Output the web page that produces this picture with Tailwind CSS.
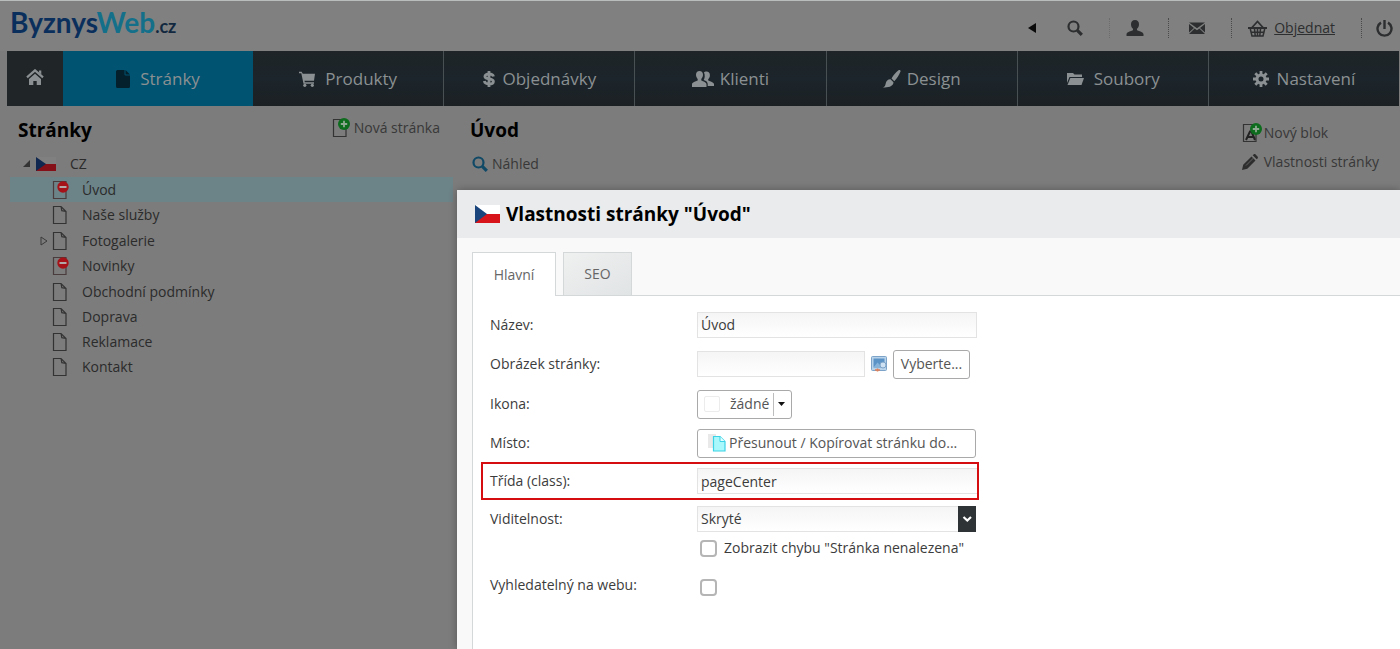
<!DOCTYPE html>
<html lang="cs">
<head>
<meta charset="utf-8">
<meta name="viewport" content="width=device-width, initial-scale=1">
<title>ByznysWeb.cz – Vlastnosti stránky</title>
<script src="https://cdn.jsdelivr.net/npm/@tailwindcss/browser@4"></script>
</head>
<body class="relative flex flex-col min-h-screen overflow-hidden bg-[#7c7c7c] border-t border-[#b9bdbc] font-['Open_Sans','Noto_Sans',sans-serif] text-[14px] leading-5 text-[#2b2b2b]">

<svg class="hidden" aria-hidden="true">
  <symbol id="page" viewBox="0 0 16 20"><path d="M1.500 1.500h7.500l5 5v12h-12.500z M9 1.500l.8 4.200 4.200.8" fill="none" stroke="#333" stroke-width="1.200"/></symbol>
  <symbol id="page-hidden" viewBox="0 0 18 20"><path d="M1.500 1.500h12.500v17h-12.500z" fill="none" stroke="#4a3c3c" stroke-width="1.200"/><circle cx="11" cy="7" r="5.700" fill="#a51218"/><path d="M7.500 7h7" stroke="#b3a8a8" stroke-width="2"/></symbol>
  <symbol id="search" viewBox="0 0 16 16"><circle cx="6.500" cy="6.500" r="5" fill="none" stroke="currentColor" stroke-width="2.200"/><path d="M10.300 10.300l4.500 4.500" stroke="currentColor" stroke-width="3.200"/></symbol>
  <symbol id="plus-badge" viewBox="0 0 12 12"><circle cx="6" cy="6" r="6" fill="#0d6c1d"/><path d="M6 2.800v6.400M2.800 6h6.400" stroke="#8fa892" stroke-width="1.800"/></symbol>
</svg>

<header class="flex h-[50px] items-center pl-2.5 pr-[7px] bg-[#808080] text-[#2c2e2f]">
  <a href="#" class="mr-auto pb-1 font-['Lato',sans-serif] font-bold text-[28px] leading-8 text-[#0b2f5c]">Byznys<span class="text-[#14708a]">Web</span><span class="text-[18px] text-[#12283f]">.cz</span></a>
  <div class="flex items-center pt-1">
    <button type="button" aria-label="Sbalit" class="mr-7.5"><svg class="w-2.5 h-2.5" viewBox="0 0 10 10"><path d="M9 0v10L1 5z" fill="#0a0a0a"/></svg></button>
    <button type="button" aria-label="Hledat" class="mr-6.5"><svg class="size-4"><use href="#search"/></svg></button>
    <span class="h-5 border-l border-dotted border-[#6c6c6c] mr-4"></span>
    <button type="button" aria-label="Účet" class="mr-6"><svg class="w-[18px] h-4" viewBox="0 0 18 16" fill="currentColor"><path d="M9 0c2.600 0 4 1.800 4 4.200 0 1.900-.8 3.600-2 4.600v1.400c2 .9 6.500 1.700 6.500 4V16H.5v-1.800c0-2.300 4.500-3.100 6.500-4V8.800C5.800 7.800 5 6.100 5 4.200 5 1.800 6.400 0 9 0z"/></svg></button>
    <span class="h-5 border-l border-dotted border-[#4a4a4a] mr-5"></span>
    <button type="button" aria-label="Zprávy" class="mr-6.5"><svg class="w-4 h-3" viewBox="0 0 16 12" fill="currentColor"><path d="M0 .5h16L8 6.300z"/><path d="M0 2l5 3.900L0 10.500zM16 2l-5 3.900 5 4.600zM5.600 6.500L8 8.200l2.400-1.700L16 12H0z"/></svg></button>
    <span class="h-5 border-l border-dotted border-[#4a4a4a] mr-4"></span>
    <a href="#" class="flex items-center gap-[7px] mr-6.5"><svg class="w-[19px] h-[17px]" viewBox="0 0 19 17" fill="none" stroke="currentColor"><path d="M4 7.500l5.500-6 5.500 6" stroke-width="1.800"/><path d="M0 8h19" stroke-width="2"/><path d="M2.300 9l1.700 7h11l1.700-7M6.500 9l.7 6.500M9.500 9v6.500M12.500 9l-.7 6.500M3 12.300h13" stroke-width="1.500"/></svg><span class="underline">Objednat</span></a>
    <span class="h-5 border-l border-dotted border-[#4a4a4a] mr-3.5"></span>
    <button type="button" aria-label="Odhlásit"><svg class="size-[17px]" viewBox="0 0 17 17" fill="none" stroke="currentColor" stroke-width="2.400"><path d="M5 2.600a7 7 0 1 0 7 0M8.500 0v9"/></svg></button>
  </div>
</header>

<nav class="flex h-[55px] ml-[7px] mr-px bg-linear-to-b from-[#1e2427] via-[#1c252b] to-[#1b2023] text-[17px] leading-6 text-[#8b9092]">
  <a href="#" aria-label="Domů" class="flex w-14 items-center justify-center bg-[#202528]"><svg class="w-[18px] h-4 mb-1" viewBox="0 0 18 16"><path d="M1 8.300L9 1.300l8 7" fill="none" stroke="currentColor" stroke-width="2.200"/><path d="M13 1.500h2.300v4L13 3.500zM9 4.800l6 5.200v6h-4.300v-4H7.300v4H3v-6z" fill="currentColor"/></svg></a>
  <a href="#" class="flex flex-1 items-center justify-center gap-2.5 bg-[#005371]"><svg class="w-3.5 h-[18px]" viewBox="0 0 14 18"><path d="M1.500 0H8.500v4.500q0 1 1 1H14v11q0 1.500-1.500 1.500h-11Q0 18 0 16.500v-15Q0 0 1.500 0zM9.500 0L14 4.600H9.500z" fill="#04202c"/></svg>Stránky</a>
  <a href="#" class="flex flex-1 items-center justify-center gap-2.5"><svg class="w-4 h-4" viewBox="0 0 16 16"><path d="M0 .8h2.600l1.200 2H16l-1 7H5.500l.3 1.500H15v1.500H4.500L2.300 2.300H0z" fill="currentColor"/><circle cx="5.800" cy="14.300" r="1.600" fill="currentColor"/><circle cx="13.300" cy="14.300" r="1.600" fill="currentColor"/></svg>Produkty</a>
  <a href="#" class="flex flex-1 items-center justify-center gap-2 border-l border-[#485054]"><svg class="w-3 h-4" viewBox="0 0 12 16" fill="none" stroke="currentColor" stroke-width="2.800"><path d="M10.500 5.500C10 3.600 8.500 3 6 3 3.500 3 1.900 3.900 1.900 5.400 1.900 9 10.400 6.600 10.400 10.400 10.400 12.100 8.600 13 6 13 3.300 13 1.700 12.100 1.300 10M6 0v16"/></svg>Objednávky</a>
  <a href="#" class="flex flex-1 items-center justify-center gap-1.5 border-l border-[#485054]"><svg class="w-[22px] h-4" viewBox="0 0 22 16" fill="currentColor"><path d="M7.500 0c2.200 0 3.500 1.500 3.500 3.800 0 1.700-.7 3.200-1.700 4.100v1.500c2 .9 5.200 1.700 5.200 3.800V16H0v-2.800c0-2.100 3.700-2.900 5.700-3.800V7.900C4.700 7 4 5.500 4 3.800 4 1.500 5.300 0 7.500 0z"/><path d="M12 1.600c.5-.6 1.400-1 2.500-1 2.100 0 3.400 1.400 3.400 3.600 0 1.600-.7 3-1.700 3.900v1.300c2 .9 5.800 1.700 5.800 3.700V15h-6.300v-2c0-1.900-1.500-3.100-4-4 1.100-1.400 1.500-4.800.3-7.400z"/></svg>Klienti</a>
  <a href="#" class="flex flex-1 items-center justify-center gap-1.5 border-l border-[#485054]"><svg class="w-[18px] h-[18px]" viewBox="0 0 18 18" fill="currentColor"><path d="M15.500.3c1-.7 2.400 0 2 1.200-1.600 4-3.400 7-6.200 9.700L8.500 8.500C10.500 5.200 12.600 2.500 15.500.3zM7.500 9.300l3 3c-.2 3.700-4 5.500-10.500 5.100 2-.9 2.300-1.800 2.700-3.900.4-2.400 2.200-4.300 4.800-4.200z"/></svg>Design</a>
  <a href="#" class="flex flex-1 items-center justify-center gap-2.5 border-l border-[#485054]"><svg class="w-[18px] h-3.5" viewBox="0 0 18 14" fill="currentColor"><path d="M1 1h6l1.500 1.500H16V5H3.500L1 11z"/><path d="M4.300 6H18l-2.500 7H1.500z"/></svg>Soubory</a>
  <a href="#" class="flex flex-1 items-center justify-center gap-2 border-l border-[#485054]"><svg class="size-4" viewBox="0 0 16 16" fill="none" stroke="currentColor"><circle cx="8" cy="8" r="4" stroke-width="3"/><path d="M8 0v3M8 13v3M0 8h3M13 8h3M2.300 2.300l2.200 2.200M11.500 11.500l2.200 2.200M2.300 13.700l2.200-2.200M11.500 4.500l2.200-2.200" stroke-width="2.800"/></svg>Nastavení</a>
</nav>

<main class="flex flex-1 ml-2.5 mr-px">
  <aside class="w-[443px] shrink-0">
    <div class="flex items-start justify-between pt-3 pl-2 pr-[13px] pb-[9px]">
      <h1 class="font-bold text-[19px] leading-6 text-black">Stránky</h1>
      <a href="#" class="flex items-center gap-1 text-[#383838]"><span class="relative"><svg class="w-[18px] h-5" viewBox="0 0 18 20"><path d="M1.500 1.500h12.500v17h-12.500z" fill="none" stroke="#333" stroke-width="1.200"/></svg><svg class="absolute top-0 left-1.5 size-3"><use href="#plus-badge"/></svg></span>Nová stránka</a>
    </div>
    <ul>
      <li class="flex h-[26px] items-center pl-3"><svg class="w-2 h-2 mr-1.5" viewBox="0 0 8 8"><path d="M8 0v7H1z" fill="#333"/></svg><svg class="w-5 h-3.5 mr-3.5" viewBox="0 0 20 14"><path d="M0 0h20v7H0z" fill="#808080"/><path d="M0 7h20v7H0z" fill="#861018"/><path d="M0 0l10 7-10 7z" fill="#10284f"/></svg>CZ</li>
      <li class="flex h-[25px] items-center gap-3 pl-[42px] bg-[#6c8388]"><svg class="w-[18px] h-5"><use href="#page-hidden"/></svg><a href="#">Úvod</a></li>
      <li class="flex h-[26px] items-center gap-3.5 pl-[42px]"><svg class="w-4 h-5"><use href="#page"/></svg><a href="#">Naše služby</a></li>
      <li class="flex h-[25px] items-center gap-3.5 pl-[30px]"><span class="flex items-center gap-1"><svg class="w-2 h-2.5" viewBox="0 0 8 10"><path d="M1 1l6 4-6 4z" fill="none" stroke="#3a3a3a"/></svg><svg class="w-4 h-5"><use href="#page"/></svg></span><a href="#">Fotogalerie</a></li>
      <li class="flex h-[26px] items-center gap-3 pl-[42px]"><svg class="w-[18px] h-5"><use href="#page-hidden"/></svg><a href="#">Novinky</a></li>
      <li class="flex h-[25px] items-center gap-3.5 pl-[42px]"><svg class="w-4 h-5"><use href="#page"/></svg><a href="#">Obchodní podmínky</a></li>
      <li class="flex h-[25px] items-center gap-3.5 pl-[42px]"><svg class="w-4 h-5"><use href="#page"/></svg><a href="#">Doprava</a></li>
      <li class="flex h-[25px] items-center gap-3.5 pl-[42px]"><svg class="w-4 h-5"><use href="#page"/></svg><a href="#">Reklamace</a></li>
      <li class="flex h-[26px] items-center gap-3.5 pl-[42px]"><svg class="w-4 h-5"><use href="#page"/></svg><a href="#">Kontakt</a></li>
    </ul>
  </aside>
  <section class="flex flex-1 justify-between pl-[17px] pt-3 pr-5 text-[#383838]">
    <div>
      <h2 class="font-bold text-[19px] leading-6 text-black">Úvod</h2>
      <a href="#" class="flex items-center gap-1 mt-3 pl-0.5"><svg class="size-4 text-[#0f4966]"><use href="#search"/></svg>Náhled</a>
    </div>
    <div class="flex flex-col gap-[9px] pt-[5px]">
      <a href="#" class="flex items-center gap-0.5"><span class="relative"><svg class="w-5 h-5" viewBox="0 0 20 20"><path d="M1.500 1.500h12.500v17h-12.500z" fill="none" stroke="#333" stroke-width="1.200"/><path d="M4 17L8 8.500h1.500L13 17M5.500 14h6" fill="none" stroke="#222" stroke-width="2"/></svg><svg class="absolute top-0 left-2 size-3"><use href="#plus-badge"/></svg></span>Nový blok</a>
      <a href="#" class="flex items-center gap-1.5"><svg class="size-4" viewBox="0 0 16 16" fill="#2d2d2d"><path d="M0 16l1.200-5.300L9.500 2.400l4 4L5.300 14.800zM10.700 1.300l.9-.8c.6-.6 1.400-.6 2 0L15.500 2.400c.6.6.6 1.500 0 2.100l-.8.800z"/><path d="M4 11.500L11.500 4" stroke="#626262"/></svg>Vlastnosti stránky</a>
    </div>
  </section>
</main>

<div role="dialog" aria-labelledby="dialog-title" class="absolute left-[457px] right-0 top-[189px] bottom-0 flex flex-col bg-[#f9f9f9] shadow-[0_0_8px_rgba(0,0,0,0.3)]">
  <div class="flex h-12 items-center gap-1.5 pl-[18px] bg-[#eaebec] shrink-0">
    <svg class="w-[25px] h-[18px]" viewBox="0 0 25 18"><path d="M0 0h25v9H0z" fill="#fff"/><path d="M0 9h25v9H0z" fill="#d7141a"/><path d="M0 0l12 9-12 9z" fill="#1a457c"/></svg>
    <h2 id="dialog-title" class="font-bold text-[19px] leading-6 text-black">Vlastnosti stránky "Úvod"</h2>
  </div>
  <div role="tablist" class="relative z-10 flex gap-[7px] pt-3.5 ml-[15px] text-[#666]">
    <button type="button" role="tab" aria-selected="true" class="h-11 w-[84px] -mb-px bg-white border border-b-0 border-[#d5d8d8]">Hlavní</button>
    <button type="button" role="tab" aria-selected="false" class="h-[43px] w-[69px] bg-linear-to-br from-[#eff0f0] to-[#e1e4e5] border border-b-0 border-[#d5d8d8]">SEO</button>
  </div>
  <form class="flex-1 ml-[15px] pt-2.5 pl-2 bg-white border-t border-l border-[#d5d8d8] text-[#3c3c3c]">
    <div class="flex h-[38px] items-center px-[9px]">
      <label for="nazev" class="w-[207px]">Název:</label>
      <input id="nazev" type="text" value="Úvod" class="w-[280px] h-[26px] px-[3px] pb-0.5 border border-[#e3e3e3] bg-linear-to-b from-[#f5f5f5] to-white">
    </div>
    <div class="flex h-10 items-center px-[9px]">
      <label for="obrazek" class="w-[207px]">Obrázek stránky:</label>
      <input id="obrazek" type="text" class="w-[168px] h-[26px] px-[3px] border border-[#e3e3e3] bg-linear-to-b from-[#f5f5f5] to-white">
      <svg class="size-4 mx-1.5" viewBox="0 0 16 16"><rect x=".5" y=".5" width="15" height="14" rx="1" fill="#b9d3ea" stroke="#7da3c8"/><rect x="2.500" y="2.500" width="11" height="9" fill="#5b93c6"/><path d="M2.500 11.500l4-5 3 3 1.500-1.500 2.500 3.500z" fill="#86b3da"/><circle cx="12" cy="9" r="3" fill="#cfe2f3" stroke="#7da3c8"/><path d="M4 14h5M6.500 12.500v3" stroke="#e0805a" stroke-width="1.500"/></svg>
      <button type="button" class="h-[29px] w-[77px] border border-[#a9a9a9] rounded-[3px] bg-white text-[#555]">Vyberte...</button>
    </div>
    <div class="flex h-10 items-center px-[9px]">
      <span id="ikona" class="w-[207px]">Ikona:</span>
      <button type="button" aria-labelledby="ikona" class="flex h-[29px] items-center px-1.5 border border-[#a9a9a9] rounded-[3px] bg-white text-[#555]"><span class="size-4 mr-2.5 border border-[#ececec] rounded-xs"></span>žádné<span class="ml-1 mr-1 h-[23px] border-l border-[#bdbdbd]"></span><svg class="w-[7px] h-1" viewBox="0 0 7 4"><path d="M0 0h7L3.500 4z" fill="#111"/></svg></button>
    </div>
    <div class="flex h-[38px] items-center px-[9px]">
      <span id="misto" class="w-[207px]">Místo:</span>
      <button type="button" class="flex h-[29px] w-[279px] items-center gap-[3px] pl-2.5 whitespace-nowrap border border-[#a9a9a9] rounded-[3px] bg-white text-[#555]"><svg class="w-[18px] h-[18px] shrink-0" viewBox="0 0 18 18"><path d="M0 0h8v14H0z" fill="#e9e9e9"/><path d="M5.500 2.500h6.500l5 5v9.500H5.500z" fill="#a9f8fb" stroke="#3cd3e6" stroke-width="1.200"/><path d="M12 2.500v5h5" fill="#e3ffff" stroke="#3cd3e6"/></svg>Přesunout / Kopírovat stránku do...</button>
    </div>
    <div class="flex w-[498px] h-[38px] items-center px-[7px] border-2 border-[#d50d10]">
      <label for="trida" class="w-[207px] shrink-0">Třída (class):</label>
      <input id="trida" type="text" value="pageCenter" class="flex-1 -mr-[7px] h-[26px] px-[3px] border border-r-0 border-[#e3e3e3] bg-linear-to-b from-[#f5f5f5] to-white">
    </div>
    <div class="flex h-[38px] items-center px-[9px]">
      <label for="viditelnost" class="w-[207px]">Viditelnost:</label>
      <span class="relative flex w-[279px]">
        <select id="viditelnost" class="appearance-none w-full h-[26px] px-[3px] border border-[#e3e3e3] bg-linear-to-b from-[#f5f5f5] to-white"><option>Skryté</option></select>
        <svg class="absolute right-0 top-0 w-[18px] h-[26px] pointer-events-none" viewBox="0 0 18 26"><path d="M0 0h18v26H0z" fill="#2e3436"/><path d="M5.500 11l3.800 3.500L13 11" fill="none" stroke="#fff" stroke-width="2.200"/></svg>
      </span>
    </div>
    <div class="flex h-5 items-center pl-[219px]">
      <input id="chyba" type="checkbox" class="appearance-none size-[17px] border-2 border-[#b5b5b5] rounded-[4px] bg-white">
      <label for="chyba" class="ml-[7px]">Zobrazit chybu "Stránka nenalezena"</label>
    </div>
    <div class="flex h-[38px] mt-2.5 items-center px-[9px]">
      <label for="hledat" class="w-[210px] pb-1">Vyhledatelný na webu:</label>
      <input id="hledat" type="checkbox" class="appearance-none size-[17px] border-2 border-[#b5b5b5] rounded-[4px] bg-white">
    </div>
  </form>
</div>
</body>
</html>
